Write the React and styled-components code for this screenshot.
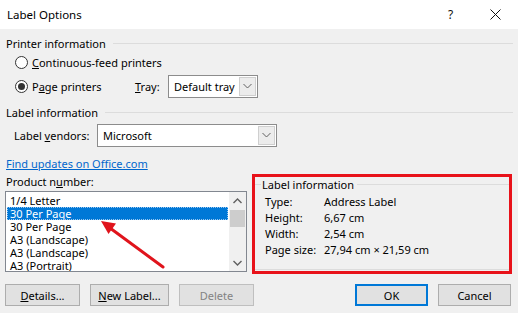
import React from 'react';
import styled, { createGlobalStyle } from 'styled-components';

const GlobalStyle = createGlobalStyle`
  html, body { margin: 0; padding: 0; background: #f0f0f0; }
  body { font-family: "Noto Sans", "DejaVu Sans", sans-serif; font-size: 11px; line-height: 15px; color: #000; }
`;

const Window = styled.div`
  position: relative;
  width: 518px;
  height: 313px;
  background: #f0f0f0;
  display: flex;
  flex-direction: column;
  overflow: hidden;
  white-space: nowrap;
`;

const TitleBar = styled.div`
  height: 29px;
  background: #fff;
  display: flex;
  align-items: center;
  padding-left: 7px;
`;

const Title = styled.div`
  flex: 1;
  font-size: 11.5px;
`;

const CaptionButton = styled.div`
  width: 45px;
  height: 29px;
  display: flex;
  align-items: center;
  justify-content: center;
  font-size: 12px;
  color: #111;
`;

const Body = styled.div`
  padding: 0 5px 0 5px;
  display: flex;
  flex-direction: column;
  flex: 1;
`;

const GroupHeader = styled.div`
  display: flex;
  align-items: center;
  height: 16px;
  margin-top: ${p => p.$top || 0}px;
  padding-left: 1px;
  &::after {
    content: "";
    flex: 1;
    height: 1px;
    background: #dcdcdc;
    margin-left: 7px;
  }
`;

const RadioRow = styled.div`
  display: flex;
  align-items: center;
  height: ${p => p.$h}px;
  padding-left: 10px;
`;

const RadioOption = styled.label`
  display: flex;
  align-items: center;
  gap: 4px;
  width: ${p => (p.$w ? `${p.$w}px` : 'auto')};
`;

const RadioCircle = styled.span`
  width: 11px;
  height: 11px;
  border: 1px solid #333;
  border-radius: 50%;
  background: #fff;
  display: flex;
  align-items: center;
  justify-content: center;
  &::after {
    content: "";
    width: 7px;
    height: 7px;
    border-radius: 50%;
    background: ${p => (p.$checked ? '#333' : 'transparent')};
  }
`;

const FieldLabel = styled.span`
  display: inline-block;
  width: ${p => p.$w}px;
`;

const Combo = styled.div`
  width: ${p => p.$w}px;
  height: 23px;
  box-sizing: border-box;
  border: 1px solid #8c8c8c;
  background: #fff;
  display: flex;
  align-items: stretch;
`;

const ComboValue = styled.div`
  flex: 1;
  display: flex;
  align-items: center;
  padding-left: 5px;
  overflow: hidden;
`;

const ComboArrow = styled.div`
  width: 15px;
  margin: 1px;
  border: 1px solid #cfcfcf;
  background: #ececec;
  display: flex;
  align-items: center;
  justify-content: center;
`;

const FieldRow = styled.div`
  display: flex;
  align-items: center;
  height: 24px;
  margin-top: 3px;
  padding-left: 9px;
`;

const Link = styled.a`
  display: block;
  height: 16px;
  line-height: 16px;
  margin-top: 9px;
  padding-left: 1px;
  color: #0066cc;
  text-decoration: underline;
  align-self: flex-start;
`;

const MainRow = styled.div`
  display: flex;
  align-items: flex-start;
  margin-top: 2px;
`;

const LeftCol = styled.div`
  width: 242px;
  display: flex;
  flex-direction: column;
`;

const PlainLabel = styled.div`
  height: 16px;
  line-height: 16px;
  padding-left: 1px;
`;

const ListBox = styled.div`
  margin-top: 1px;
  height: 81px;
  box-sizing: border-box;
  border: 1px solid #828790;
  background: #fff;
  display: flex;
`;

const Items = styled.div`
  flex: 1;
  padding: 2px 1px 0 1px;
  overflow: hidden;
`;

const Item = styled.div`
  height: 13px;
  line-height: 13px;
  padding-left: 3px;
  box-sizing: border-box;
  background: ${p => (p.$selected ? '#0078d7' : 'transparent')};
  color: ${p => (p.$selected ? '#fff' : '#000')};
  outline: ${p => (p.$selected ? '1px dotted #9ac7f0' : 'none')};
  outline-offset: -1px;
`;

const ScrollBar = styled.div`
  width: 17px;
  background: #f0f0f0;
  display: flex;
  flex-direction: column;
`;

const ScrollArrow = styled.div`
  height: 17px;
  display: flex;
  align-items: center;
  justify-content: center;
`;

const ScrollThumb = styled.div`
  height: 17px;
  margin: 1px 1px 0 1px;
  background: #cdcdcd;
`;

const ScrollTrack = styled.div`
  flex: 1;
`;

const InfoBox = styled.div`
  margin-left: 5px;
  width: 260px;
  height: 100px;
  box-sizing: border-box;
  border: 3px solid #e8121a;
  display: flex;
  flex-direction: column;
`;

const InfoGroup = styled.div`
  flex: 1;
  border-bottom: 1px solid #dcdcdc;
  margin-bottom: 1px;
`;

const InfoHeader = styled.div`
  display: flex;
  align-items: center;
  height: 14px;
  &::before {
    content: "";
    width: 6px;
    height: 1px;
    background: #dcdcdc;
    margin-right: 1px;
  }
  &::after {
    content: "";
    flex: 1;
    height: 1px;
    background: #dcdcdc;
    margin-left: 3px;
  }
`;

const InfoRows = styled.div`
  margin-top: 3px;
  padding-left: 10px;
`;

const InfoRow = styled.div`
  display: flex;
  height: 16px;
  line-height: 16px;
`;

const InfoKey = styled.span`
  width: 59px;
`;

const ButtonRow = styled.div`
  display: flex;
  align-items: center;
  margin-top: 10px;
  padding-right: 2px;
`;

const ButtonGroup = styled.div`
  display: flex;
  gap: ${p => p.$gap}px;
  margin-left: ${p => (p.$push ? 'auto' : '0')};
`;

const Button = styled.div`
  width: ${p => p.$w}px;
  height: 22px;
  box-sizing: border-box;
  display: flex;
  align-items: center;
  justify-content: center;
  background: #e1e1e1;
  border: 1px solid ${p => (p.$primary ? '#0078d7' : p.$disabled ? '#bfbfbf' : '#adadad')};
  box-shadow: ${p => (p.$primary ? 'inset 0 0 0 1px #0078d7' : 'none')};
  color: ${p => (p.$disabled ? '#838383' : '#000')};
`;

const Arrow = styled.svg`
  position: absolute;
  left: 0;
  top: 0;
  pointer-events: none;
`;

const ChevronDown = ({ color = '#606060' }) => (
  <svg width="9" height="6" viewBox="0 0 9 6">
    <polyline points="0.5,1 4.5,5 8.5,1" fill="none" stroke={color} strokeWidth="1" />
  </svg>
);

const ScrollDown = () => (
  <svg width="9" height="6" viewBox="0 0 9 6">
    <polyline points="0.5,1 4.5,5 8.5,1" fill="none" stroke="#606060" strokeWidth="1.4" />
  </svg>
);

const ScrollUp = () => (
  <svg width="9" height="6" viewBox="0 0 9 6">
    <polyline points="0.5,5 4.5,1 8.5,5" fill="none" stroke="#606060" strokeWidth="1.4" />
  </svg>
);

const products = ['1/4 Letter', '30 Per Page', '30 Per Page', 'A3 (Landscape)', 'A3 (Landscape)', 'A3 (Portrait)'];

const info = [
  ['Type:', 'Address Label'],
  ['Height:', '6,67 cm'],
  ['Width:', '2,54 cm'],
  ['Page size:', '27,94 cm × 21,59 cm'],
];

export default function App() {
  return (
    <Window>
      <GlobalStyle />
      <TitleBar>
        <Title>Label Options</Title>
        <CaptionButton>?</CaptionButton>
        <CaptionButton>
          <svg width="11" height="11" viewBox="0 0 11 11">
            <path d="M0.5 0.5 L10.5 10.5 M10.5 0.5 L0.5 10.5" stroke="#111" strokeWidth="1" />
          </svg>
        </CaptionButton>
      </TitleBar>

      <Body>
        <GroupHeader $top={6}>Printer information</GroupHeader>
        <RadioRow $h={22}>
          <RadioOption>
            <RadioCircle />
            <span><u>C</u>ontinuous-feed printers</span>
          </RadioOption>
        </RadioRow>
        <RadioRow $h={26}>
          <RadioOption $w={120}>
            <RadioCircle $checked />
            <span>P<u>a</u>ge printers</span>
          </RadioOption>
          <FieldLabel $w={33}><u>T</u>ray:</FieldLabel>
          <Combo $w={90}>
            <ComboValue>Default tray</ComboValue>
            <ComboArrow><ChevronDown /></ComboArrow>
          </Combo>
        </RadioRow>

        <GroupHeader $top={5}>Label information</GroupHeader>
        <FieldRow>
          <FieldLabel $w={83}>Label <u>v</u>endors:</FieldLabel>
          <Combo $w={180}>
            <ComboValue>Microsoft</ComboValue>
            <ComboArrow><ChevronDown /></ComboArrow>
          </Combo>
        </FieldRow>

        <Link>Find updates on Office.com</Link>

        <MainRow>
          <LeftCol>
            <PlainLabel>Product n<u>u</u>mber:</PlainLabel>
            <ListBox>
              <Items>
                {products.map((p, i) => (
                  <Item key={i} $selected={i === 1}>{p}</Item>
                ))}
              </Items>
              <ScrollBar>
                <ScrollArrow><ScrollUp /></ScrollArrow>
                <ScrollThumb />
                <ScrollTrack />
                <ScrollArrow><ScrollDown /></ScrollArrow>
              </ScrollBar>
            </ListBox>
          </LeftCol>

          <InfoBox>
            <InfoGroup>
              <InfoHeader>Label information</InfoHeader>
              <InfoRows>
                {info.map(([k, v]) => (
                  <InfoRow key={k}>
                    <InfoKey>{k}</InfoKey>
                    <span>{v}</span>
                  </InfoRow>
                ))}
              </InfoRows>
            </InfoGroup>
          </InfoBox>
        </MainRow>

        <ButtonRow>
          <ButtonGroup $gap={10}>
            <Button $w={75}><span><u>D</u>etails...</span></Button>
            <Button $w={79}><span><u>N</u>ew Label...</span></Button>
            <Button $w={75} $disabled>Delete</Button>
          </ButtonGroup>
          <ButtonGroup $gap={10} $push>
            <Button $w={73} $primary>OK</Button>
            <Button $w={73}>Cancel</Button>
          </ButtonGroup>
        </ButtonRow>
      </Body>

      <Arrow width="518" height="313" viewBox="0 0 518 313">
        <line x1="163" y1="267" x2="110" y2="228" stroke="#e0141c" strokeWidth="3" strokeLinecap="round" />
        <polygon points="101,221 116,223.5 108.5,234" fill="#e0141c" />
      </Arrow>
    </Window>
  );
}
